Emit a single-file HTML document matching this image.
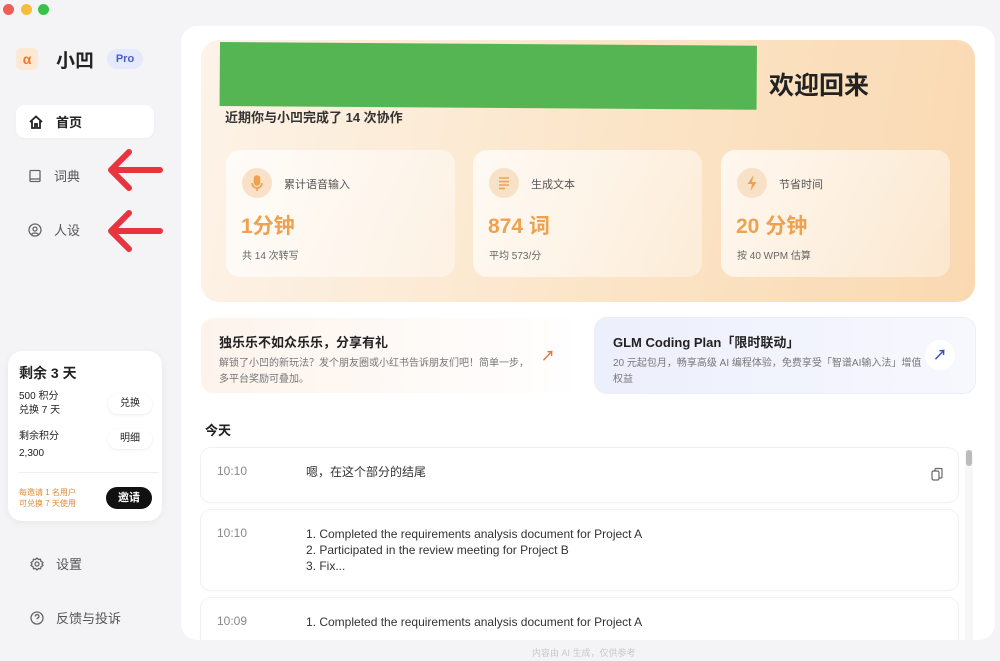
<!DOCTYPE html>
<html><head><meta charset="utf-8"><style>
*{box-sizing:border-box;margin:0;padding:0}
body{width:1000px;height:661px;overflow:hidden;background:#f4f4f6;font-family:"Liberation Sans","Noto Sans CJK SC",sans-serif;position:relative;color:#222}
.a{position:absolute}
.dot{position:absolute;top:4px;width:11px;height:11px;border-radius:50%}
.nav{position:absolute;left:16px;width:138px;height:33px;border-radius:9px;font-size:13px;color:#555;display:flex;align-items:center;padding-left:12px;gap:12px}
.panel{left:181px;top:26px;width:814px;height:614px;background:#fff;border-radius:16px;overflow:hidden}
.hero{left:20px;top:14px;width:774px;height:262px;border-radius:18px;background:linear-gradient(100deg,#fdf3e8 0%,#fbe3c4 60%,#fad9b2 100%)}
.stat{position:absolute;top:110px;width:229px;height:127px;border-radius:14px;background:linear-gradient(120deg,rgba(255,255,255,.75),rgba(255,255,255,.35));}
.stat .ic{position:absolute;left:16px;top:18px;width:30px;height:30px;border-radius:50%;background:#f9e1c7}
.stat .lb{position:absolute;left:58px;top:26px;font-size:11px;color:#555}
.stat .v{position:absolute;left:15px;top:60px;font-size:21px;font-weight:bold;color:#eea24f}
.stat .s{position:absolute;left:16px;top:97px;font-size:10px;color:#666}
.promo{position:absolute;top:292px;width:380px;height:75px;border-radius:12px;padding:14px 18px}
.promo h3{font-size:13px;font-weight:bold;color:#222;margin-bottom:5px}
.promo p{font-size:10px;color:#777;line-height:16px;width:310px}
.item{position:absolute;left:20px;width:757px;border-radius:10px;background:#fff;box-shadow:0 0 0 1px #f0f0f2,0 1px 3px rgba(0,0,0,.03)}
.item .t{position:absolute;left:16px;top:16px;font-size:12px;color:#888}
.item .c{position:absolute;left:105px;top:16px;font-size:12px;color:#333;line-height:16px}
.btn{position:absolute;left:108px;width:44px;height:20px;border-radius:10px;background:#fff;box-shadow:0 1px 3px rgba(0,0,0,.08);font-size:10px;text-align:center;line-height:20px;color:#222}
</style></head><body>
<div class="dot" style="left:3px;background:#ee5d56"></div>
<div class="dot" style="left:21px;background:#f5bd3a"></div>
<div class="dot" style="left:38px;background:#36c348"></div>

<div class="a" style="left:16px;top:48px;width:22px;height:22px;border-radius:6px;background:#fde8d4;color:#f07a26;font-weight:bold;font-size:14px;text-align:center;line-height:22px">α</div>
<div class="a" style="left:56px;top:46px;font-size:19px;font-weight:bold;color:#222">小凹</div>
<div class="a" style="left:107px;top:49px;width:36px;height:20px;border-radius:10px;background:#e4e9fb;color:#4a5fc1;font-size:11px;font-weight:bold;text-align:center;line-height:20px">Pro</div>

<div class="nav" style="top:105px;background:#fff;color:#222;font-weight:bold;box-shadow:0 1px 3px rgba(0,0,0,.03)">
<svg width="16" height="16" viewBox="0 0 16 16" fill="none" stroke="#222" stroke-width="1.8"><path d="M2 8L8 2.5 14 8M4 7v7h3v-4h2v4h3V7"/></svg>首页</div>
<div class="nav" style="top:159px"><svg width="14" height="14" viewBox="0 0 14 14" fill="none" stroke="#666" stroke-width="1.3"><rect x="2" y="1.5" width="10" height="11" rx="1"/><path d="M2 10h10"/></svg>词典</div>
<div class="nav" style="top:213px"><svg width="14" height="14" viewBox="0 0 14 14" fill="none" stroke="#666" stroke-width="1.3"><circle cx="7" cy="7" r="6"/><circle cx="7" cy="6" r="2"/><path d="M3.5 11.5c1-2 6-2 7 0"/></svg>人设</div>

<svg class="a" style="left:105px;top:145px" width="60" height="50" viewBox="0 0 60 50"><path d="M55 25H8M24 7L6 25l18 18" fill="none" stroke="#e8343f" stroke-width="6" stroke-linecap="round" stroke-linejoin="round"/></svg>
<svg class="a" style="left:105px;top:206px" width="60" height="50" viewBox="0 0 60 50"><path d="M55 25H8M24 7L6 25l18 18" fill="none" stroke="#e8343f" stroke-width="6" stroke-linecap="round" stroke-linejoin="round"/></svg>

<div class="a" style="left:8px;top:351px;width:154px;height:170px;border-radius:14px;background:#fff;box-shadow:0 2px 8px rgba(0,0,0,.05)">
<div class="a" style="left:11px;top:12px;font-size:14px;font-weight:bold">剩余 3 天</div>
<div class="a" style="left:11px;top:39px;font-size:10px;line-height:14px;color:#222">500 积分<br>兑换 7 天</div>
<div class="btn" style="top:43px;left:100px">兑换</div>
<div class="a" style="left:11px;top:77px;font-size:10px;line-height:17px;color:#222">剩余积分<br>2,300</div>
<div class="btn" style="top:78px;left:100px">明细</div>
<div class="a" style="left:11px;top:121px;width:140px;height:1px;background:#eee"></div>
<div class="a" style="left:11px;top:136px;font-size:8px;line-height:11px;color:#e08a30">每邀请 1 名用户<br>可兑换 7 天使用</div>
<div class="a" style="left:98px;top:136px;width:46px;height:22px;border-radius:11px;background:#111;color:#fff;font-size:11px;text-align:center;line-height:22px;font-weight:bold">邀请</div>
</div>

<div class="nav" style="top:547px;left:18px"><svg width="14" height="14" viewBox="0 0 14 14" fill="none" stroke="#666" stroke-width="1.3"><circle cx="7" cy="7" r="2"/><path d="M7 1l1.5 1.5 2-.3.4 2L13 5.5 12 7l1 1.5-2 1.3-.4 2-2-.3L7 13l-1.5-1.5-2 .3-.4-2L1 8.5 2 7 1 5.5l2-1.3.4-2 2 .3z"/></svg>设置</div>
<div class="nav" style="top:601px;left:18px"><svg width="14" height="14" viewBox="0 0 14 14" fill="none" stroke="#666" stroke-width="1.3"><circle cx="7" cy="7" r="6"/><path d="M5.3 5.5a1.8 1.8 0 1 1 2.4 1.6c-.5.2-.7.6-.7 1.2M7 10v.3"/></svg>反馈与投诉</div>

<div class="a panel">
<div class="a hero">
<div class="a" style="left:19px;top:2px;width:537px;height:64px;background:#55b552;transform:rotate(.4deg);transform-origin:left top"></div>
<div class="a" style="left:568px;top:26px;font-size:25px;font-weight:bold;color:#222">欢迎回来</div>
<div class="a" style="left:24px;top:67px;font-size:13px;color:#333;font-weight:bold">近期你与小凹完成了 14 次协作</div>
<div class="stat" style="left:25px"><div class="ic"><svg width="30" height="30" viewBox="0 0 30 30" fill="none" stroke="#eea24f" stroke-width="1.6"><rect x="12.5" y="8" width="5" height="9" rx="2.5" fill="#eea24f"/><path d="M10 15a5 5 0 0 0 10 0M15 20v3"/></svg></div><div class="lb">累计语音输入</div><div class="v">1分钟</div><div class="s">共 14 次转写</div></div>
<div class="stat" style="left:272px"><div class="ic"><svg width="30" height="30" viewBox="0 0 30 30" stroke="#eea24f" stroke-width="1.4"><path d="M10 10h10M10 13.5h10M10 17h10M10 20.5h6"/></svg></div><div class="lb">生成文本</div><div class="v">874 词</div><div class="s">平均 573/分</div></div>
<div class="stat" style="left:520px"><div class="ic"><svg width="30" height="30" viewBox="0 0 30 30"><path d="M16.5 7l-6 9h4.5l-1.5 7 6-9H15z" fill="#eea24f"/></svg></div><div class="lb">节省时间</div><div class="v">20 分钟</div><div class="s">按 40 WPM 估算</div></div>
</div>
<div class="promo" style="left:20px;background:linear-gradient(90deg,#fdf3ec,#fff)"><h3>独乐乐不如众乐乐，分享有礼</h3><p>解锁了小凹的新玩法？发个朋友圈或小红书告诉朋友们吧！简单一步，多平台奖励可叠加。</p><div class="a" style="right:26px;top:28px;color:#e8763a;font-size:14px;font-weight:bold">↗</div></div>
<div class="promo" style="left:414px;background:linear-gradient(90deg,#eceffc,#f7f8fe);box-shadow:0 0 0 1px #eceef6"><h3>GLM Coding Plan「限时联动」</h3><p>20 元起包月，畅享高级 AI 编程体验，免费享受「智谱AI输入法」增值权益</p><div class="a" style="right:20px;top:22px;width:30px;height:30px;border-radius:50%;background:#fff;color:#3a4fb8;font-size:14px;font-weight:bold;text-align:center;line-height:30px">↗</div></div>
<div class="a" style="left:24px;top:394px;font-size:13px;font-weight:bold">今天</div>
<div class="item" style="top:422px;height:54px"><div class="t">10:10</div><div class="c">嗯，在这个部分的结尾</div>
<svg class="a" style="right:14px;top:19px" width="14" height="16" viewBox="0 0 14 16" fill="none" stroke="#666" stroke-width="1.2"><rect x="2" y="4" width="7" height="9" rx="1.5"/><path d="M5 4V2.5A1 1 0 0 1 6 1.5h5a1 1 0 0 1 1 1V10a1 1 0 0 1-1 1H9"/></svg></div>
<div class="item" style="top:484px;height:80px"><div class="t">10:10</div><div class="c">1. Completed the requirements analysis document for Project A<br>2. Participated in the review meeting for Project B<br>3. Fix...</div></div>
<div class="item" style="top:572px;height:60px"><div class="t">10:09</div><div class="c">1. Completed the requirements analysis document for Project A</div></div>
<div class="a" style="left:784px;top:424px;width:8px;height:190px;background:#f7f7f7"></div>
<div class="a" style="left:785px;top:424px;width:6px;height:16px;border-radius:3px;background:#bbb"></div>
</div>
<div class="a" style="left:532px;top:646px;font-size:9px;color:#c8c8c8">内容由 AI 生成，仅供参考</div>
</body></html>
